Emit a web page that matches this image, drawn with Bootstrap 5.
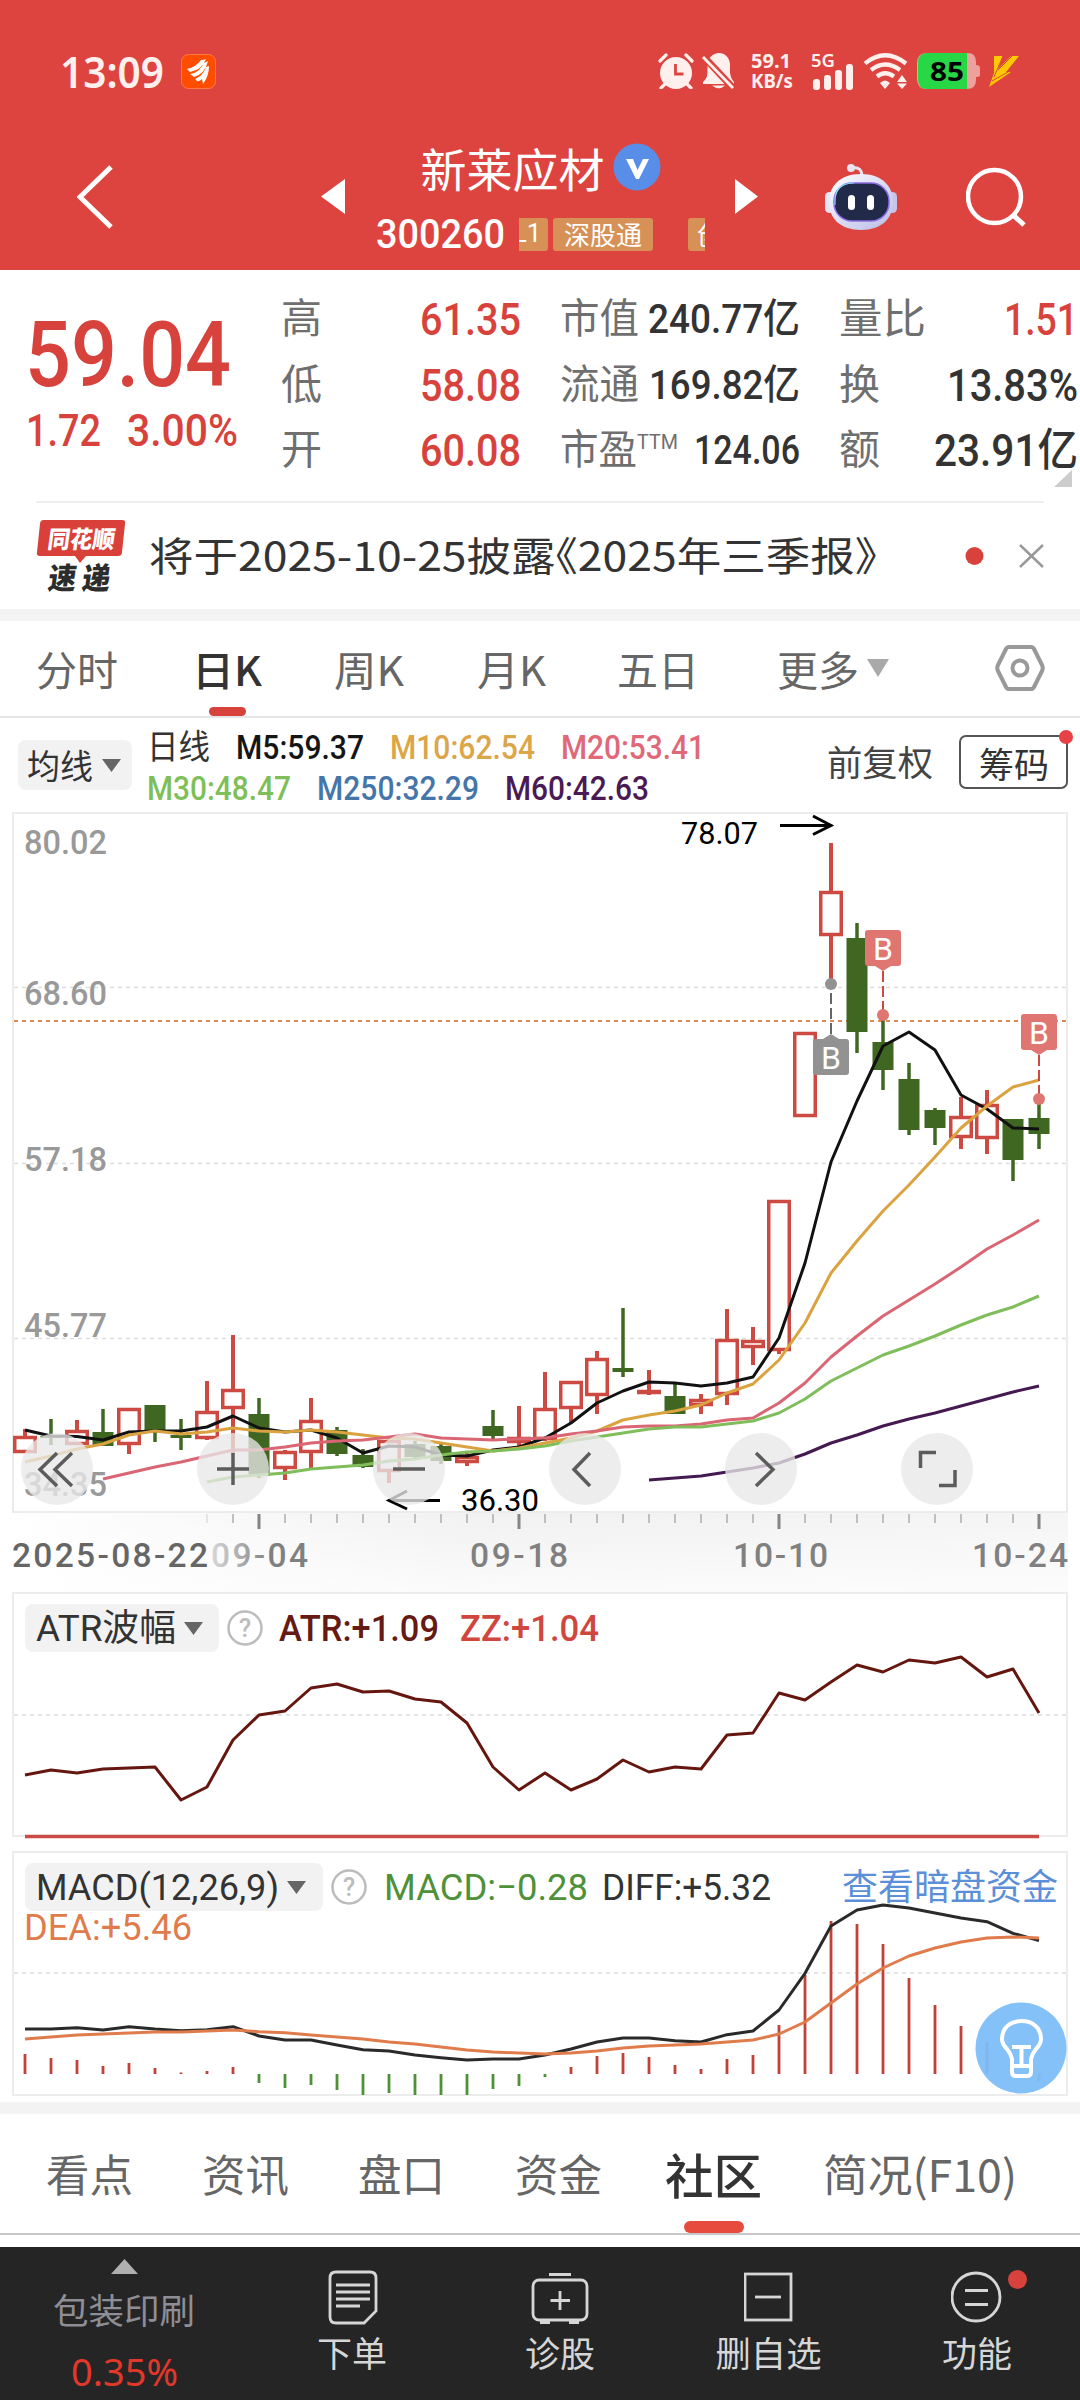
<!DOCTYPE html>
<html lang="zh-CN">
<head>
<meta charset="utf-8">
<meta name="viewport" content="width=device-width, initial-scale=1">
<title>新莱应材 300260</title>
<link href="https://cdn.jsdelivr.net/npm/bootstrap@5.3.0/dist/css/bootstrap.min.css" rel="stylesheet">
<style>
body{width:1080px;height:2400px;overflow:hidden;margin:0;background:#fff;font-family:Roboto,"Noto Sans CJK SC",sans-serif;font-weight:400;color:#333;line-height:1}
svg{display:block;flex:none}
[data-w]{display:inline-block;white-space:nowrap;transform-origin:0 50%;line-height:1}
.cjk{font-family:"Noto Sans CJK SC",sans-serif}
.up{color:#d7433c}
.status-bar{height:140px;padding:2px 61px 0 60px;color:#fff0ee;font-family:"Noto Sans",sans-serif}
.clock{font-size:43px;font-weight:600}
.app-ico{margin-left:17px}
.net-speed{font-size:20px;font-weight:700;width:44px;margin-left:15px}
.net-speed span{display:block}
.top{background:#dd443f;height:270px}
.top-nav{height:130px;padding-left:77px;padding-bottom:17px;color:#fff}
.top-title{width:329px;margin:0 30px 0 31px;height:106px}
.top-title .nm{font-size:46px;height:46px}
.top-title .code{font-size:40px;font-weight:500}
.code-row{margin-top:25px}
.prev{margin-left:206px}.robot{margin-left:67px}.finder{margin-left:69px}
.tags{width:186px;height:33px;overflow:hidden;margin-left:14px}
.tags span{background:#d79055;border-radius:3px;height:33px;line-height:31px;font-size:26px;flex:none;text-align:center}
.tag-a{width:60px;margin-left:-31px;padding-left:18px}.tag-b{width:100px;margin:0 35px 0 5px}.tag-c{width:60px;text-align:left!important;padding-left:9px}
.quote{height:231px;padding:17px 0 0 28px}
.quote>div{flex:none}
.q-main{width:253px;padding-top:23px}
.q-price{font-size:91px;font-weight:500;height:99px;margin-left:-3px}
.q-chg{font-size:44px;font-weight:500;gap:26px;margin-left:-2px}
.q-col{margin-right:39px;width:240px}
.q-col:last-of-type{width:239px;margin-right:0}
.q-col>div{height:65.5px}
.q-col b{font-weight:500;font-size:45px;color:#333}
.q-col b.sm{font-size:41px}
.q-col b.up{color:#d7433c}
.q-lab{color:#6f6f6f;font-size:41px}
.q-lab sup{font-size:21px;top:-.75em}
.q-more{right:8px;bottom:14px}
.notice{height:108px;margin:0 36px;border-top:2px solid #eee}
.notice-txt{margin-left:21px;font-size:40px;font-feature-settings:"halt";margin-bottom:4px}
.strip{height:12px;background:#f3f3f3}
.k-tabs{height:97px;border-bottom:2px solid #e6e6e6;padding-left:36px;display:grid;grid-template-columns:156px 142px 143px 140px 160px 218px 50px;font-size:41px;color:#666}
.k-tabs>div{display:flex;align-items:center;height:95px;position:relative;padding-bottom:1px}
.k-tabs .on{color:#333;font-weight:500}
.bar-on{position:absolute;background:#d7433c;border-radius:5px;bottom:0;height:9px;left:17px;width:37px}
.ma{height:94px;padding:0 12px 0 18px}
.ma-btn,.ind-btn{background:#f2f2f2;border-radius:8px}
.ma-btn{width:114px;height:50px;font-size:34px;padding-left:9px;gap:9px}
.ma-legend{margin-left:15px;font-size:34px;font-weight:500;padding-top:9px}
.ma-legend>div{gap:26px;height:40.5px}
.c5{color:#151515}.c10{color:#dca548}.c20{color:#e06878}.c30{color:#7fbf5a}.c250{color:#4576aa}.c60{color:#4a1a55}
.adj{font-size:35px;color:#444;padding-bottom:10px}
.chips{width:109px;height:54px;border:2px solid #555;border-radius:7px;font-size:35px;margin-left:26px;padding-left:18px;position:relative;margin-bottom:6px}
.red-dot{position:absolute;background:#e84045;border-radius:50%;width:14px;height:14px;right:-7px;top:-7px}
.panel{margin:0 12px;border:2px solid #ececec;position:relative;height:245px}
.panel>.plot{position:absolute;left:-14px;top:-2px}
.panel-macd{margin-top:14px}
.panel-head{position:relative;padding:10px 0 0 11px;font-size:37px;font-weight:500}
.ind-btn{height:48px;font-weight:400;font-size:37px;padding-left:11px}
.w-atr{width:194px}.w-macd{width:298px}
.v-atr{color:#651a14;margin-left:16px}.v-zz{color:#d0463f;margin-left:21px}
.v-macd{color:#4f9138;margin-left:17px;font-weight:400}.v-diff{color:#333;margin-left:14px;font-weight:400}
.bulb{position:absolute;right:-1px;bottom:0}
.link-blue{color:#5b8fd8;font-weight:400;font-size:36px;padding-bottom:6px}
.dea{position:relative;font-size:37px;font-weight:400;color:#e07c4c;padding-left:10px;height:34px;margin-top:-2px}
.strip-2{margin-top:6px}
.b-tabs{height:121px;border-bottom:2px solid #c8c8c8;padding-left:46px;display:grid;grid-template-columns:156px 156px 157px 150px 158px 1fr;font-size:44px;color:#666}
.b-tabs>div{display:flex;align-items:center;position:relative;height:119px;padding-bottom:1px}
.b-tabs .on{font-size:48px;font-weight:500;color:#333}
.b-tabs .bar-on{height:12px;width:60px;left:19px;background:#e64b3d;border-radius:6px}
.dock{margin-top:12px;height:153px;background:#252525;color:#d6d6d6;display:grid;grid-template-columns:248px 209px 206px 211px 206px;font-size:35px}
.dock>div{display:flex;flex-direction:column;align-items:center;position:relative}
.dock svg{margin-top:20px;height:62px}
.dock .d1 svg{margin-top:12px;height:15px}
.dock .lab{height:40px;margin-top:5px}
.d1 .sec{color:#8e8e96;margin-top:17px;height:36px}
.d1 .pct{color:#e2382b;font-size:38px;margin-top:25px;font-family:"Noto Sans",sans-serif}
.dock .red-dot{width:19px;height:19px;right:53px;top:23px;background:#d7433c}
</style>
<script src="https://cdn.jsdelivr.net/npm/bootstrap@5.3.0/dist/js/bootstrap.bundle.min.js"></script>
</head>
<body>
<header class="top">
  <div class="status-bar d-flex align-items-center">
    <span class="clock" data-w="104">13:09</span>
    <svg class="app-ico" width="35" height="35" viewBox="0 0 35 35"><rect x=".5" y=".5" width="34" height="34" rx="7" fill="#ff4d00" stroke="#ff7a45"/><path d="M6 15Q15 13 20 6 23 6 25 5 21 16 9 18ZM9 20Q18 19 23 9L27 7Q24 20 13 23ZM14 25Q22 22 25 13L28 12Q28 22 22 30L21 25Q18 28 16 27Z" fill="#fff"/></svg>
    <svg class="ms-auto" width="36" height="36" viewBox="0 0 36 36" fill="#fff0ee"><circle cx="18" cy="20" r="16"/><path d="M2 8 8 2M34 8 28 2M7 31 3 35M29 31 33 35" stroke="#fff0ee" stroke-width="3.2" stroke-linecap="round"/><path d="M17.500 11v10h8" fill="none" stroke="#dd443f" stroke-width="2.8"/></svg>
    <svg class="ms-2" width="34" height="36" viewBox="0 0 34 36" fill="#fff0ee"><path d="M17 0C24 0 28 6 28 12V20Q29 26 32 29V31H1V29Q5 26 5.500 20V12C5.500 5 11 0 17 0ZM10 32.500H23Q17 38 10 32.500Z"/><path d="M1 3 31 35" stroke="#dd443f" stroke-width="7"/><path d="M1 4 31 35" stroke="#fff0ee" stroke-width="2.800"/></svg>
    <div class="net-speed"><span data-w="40">59.1</span><span data-w="42">KB/s</span></div>
    <svg class="ms-3" width="44" height="37" viewBox="0 0 44 37" fill="#fff0ee"><text x="0" y="14" font-size="18" font-weight="600" textLength="24" lengthAdjust="spacingAndGlyphs">5G</text><rect x="2" y="26" width="7" height="11" rx="3"/><rect x="13" y="22" width="7" height="15" rx="3"/><rect x="24" y="17" width="7" height="20" rx="3"/><rect x="35" y="11" width="7" height="26" rx="3"/></svg>
    <svg class="ms-2" width="46" height="36" viewBox="0 0 46 36" fill="none" stroke="#fff0ee" stroke-width="4.200"><path d="M2 10.500Q22-6 43 10.500M8 17Q22 6 37 17M14 23.500Q22 17 31 23.500"/><path d="M17 30Q22 25 27 30L22 36ZM39 22 44 29H34ZM39 36 44 30.500H34Z" fill="#fff0ee" stroke="none"/></svg>
    <svg class="ms-2" width="64" height="36" viewBox="0 0 64 36"><path d="M10 0H51Q59 0 59 9V12Q63 12 63 15V22Q63 24 59 24V27Q59 36 50 36H10Q0 36 0 26V10Q0 0 10 0Z" fill="#eda09c"/><path d="M10 0H50V36H10Q1 36 1 26V10Q1 0 10 0Z" fill="#28d746"/><text x="13" y="28" font-size="27" font-weight="700" textLength="34" lengthAdjust="spacingAndGlyphs">85</text></svg>
    <svg class="ms-2" width="30" height="31" viewBox="0 0 30 31"><path d="M5 0H14L9 13 22 0H30L17 16H22L0 31 5 17Z" fill="#ffc800"/><path d="M14 0 5 21M23 0 9 14M3 25 19 16" stroke="#dd443f" stroke-width="1" fill="none"/></svg>
  </div>
  <div class="top-nav d-flex align-items-center">
    <svg width="38" height="64" viewBox="0 0 38 64"><path d="M34 2 3 32 34 62" fill="none" stroke="#fff" stroke-width="5"/></svg>
    <svg class="prev" width="24" height="35" viewBox="0 0 24 35"><path d="M24 0V35L0 17.500Z" fill="#fff"/></svg>
    <div class="top-title">
      <div class="nm d-flex align-items-center justify-content-center"><span class="cjk" data-w="184">新莱应材</span><svg class="ms-2" width="48" height="48" viewBox="0 0 48 48"><circle cx="24" cy="24" r="23.500" fill="#588ee8"/><path d="M13 16H20L24.500 27 30 16H36L26 36H23Z" fill="#fff"/></svg></div>
      <div class="code-row d-flex align-items-center"><span class="code" data-w="129">300260</span><div class="tags d-flex"><span class="tag-a">L1</span><span class="tag-b cjk">深股通</span><span class="tag-c cjk">创</span></div></div>
    </div>
    <svg width="23" height="35" viewBox="0 0 23 35"><path d="M0 0V35L23 17.500Z" fill="#fff"/></svg>
    <svg class="robot" width="72" height="68" viewBox="0 0 72 68"><defs><linearGradient id="hd" x2="1" y2="1"><stop stop-color="#fff"/><stop offset="1" stop-color="#b9bce8"/></linearGradient></defs><path d="M27 5Q37 3 37 14" fill="none" stroke="#e8e4f2" stroke-width="3"/><circle cx="26" cy="5" r="4" fill="#e8e4f2"/><rect y="29" width="9" height="21" rx="4.500" fill="#e4e4f4"/><rect x="63" y="29" width="9" height="21" rx="4.500" fill="#c8c4e6"/><path d="M36 11C58 11 68 24 68 39 68 56 56 67 36 67 16 67 4 56 4 39 4 24 14 11 36 11Z" fill="url(#hd)"/><rect x="9" y="20" width="55" height="38" rx="18" fill="#222a4a" stroke="#8a6be0" stroke-width="1.500"/><path d="M10 42V38Q10 20 29 20" fill="none" stroke="#82dff2" stroke-width="1.200"/><rect x="23" y="32" width="7" height="15" rx="3.500" fill="#fff"/><rect x="42" y="32" width="7" height="15" rx="3.500" fill="#fff"/></svg>
    <svg class="finder" width="60" height="60" viewBox="0 0 60 60" fill="none" stroke="#fff"><circle cx="28.500" cy="29.500" r="26.500" stroke-width="4.500"/><path d="M47 48 58 58" stroke-width="5"/></svg>
  </div>
</header>

<section class="quote d-flex position-relative">
  <div class="q-main up"><div class="q-price"><span data-w="206">59.04</span></div><div class="q-chg d-flex"><span data-w="75">1.72</span><span data-w="111">3.00%</span></div></div>
  <div class="q-col">
    <div class="d-flex justify-content-between align-items-center"><span class="q-lab">高</span><b class="up" data-w="101">61.35</b></div>
    <div class="d-flex justify-content-between align-items-center"><span class="q-lab">低</span><b class="up" data-w="101">58.08</b></div>
    <div class="d-flex justify-content-between align-items-center"><span class="q-lab">开</span><b class="up" data-w="101">60.08</b></div>
  </div>
  <div class="q-col">
    <div class="d-flex justify-content-between align-items-center"><span class="q-lab" data-w="79">市值</span><b class="sm" data-w="152">240.77亿</b></div>
    <div class="d-flex justify-content-between align-items-center"><span class="q-lab" data-w="79">流通</span><b class="sm" data-w="151">169.82亿</b></div>
    <div class="d-flex justify-content-between align-items-center"><span class="q-lab" data-w="118">市盈<sup>TTM</sup></span><b class="sm" data-w="106">124.06</b></div>
  </div>
  <div class="q-col">
    <div class="d-flex justify-content-between align-items-center"><span class="q-lab" data-w="87">量比</span><b class="up" data-w="74">1.51</b></div>
    <div class="d-flex justify-content-between align-items-center"><span class="q-lab">换</span><b data-w="131">13.83%</b></div>
    <div class="d-flex justify-content-between align-items-center"><span class="q-lab">额</span><b data-w="144">23.91亿</b></div>
  </div>
  <svg class="q-more position-absolute" width="18" height="17" viewBox="0 0 18 17"><path d="M18 0V17H0Z" fill="#ccc"/></svg>
</section>

<section class="notice d-flex align-items-center">
  <svg width="92" height="76" viewBox="0 0 92 76" font-family="Noto Sans CJK SC" font-weight="900"><path d="M8 2H86Q90 2 89 6L86 34Q86 38 82 38H50L44 45 39 38H4Q0 38 1 34L4 6Q4 2 8 2Z" fill="#d94039"/><g transform="skewX(-8)"><text x="15" y="30" font-size="24" fill="#fff" textLength="67" lengthAdjust="spacingAndGlyphs">同花顺</text><text x="21" y="71" font-size="30" fill="#2c2c2c" textLength="28" lengthAdjust="spacingAndGlyphs">速</text><text x="55" y="71" font-size="30" fill="#2c2c2c" textLength="28" lengthAdjust="spacingAndGlyphs">递</text></g></svg>
  <span class="notice-txt cjk" data-w="728">将于2025-10-25披露《2025年三季报》</span>
  <svg class="ms-auto" width="79" height="24" viewBox="0 0 79 24"><circle cx="9.500" cy="12" r="9" fill="#d7433c"/><path d="M55 1 78 23M78 1 55 23" stroke="#999" stroke-width="2.500"/></svg>
</section>
<div class="strip"></div>

<nav class="k-tabs cjk">
  <div><span data-w="82">分时</span></div><div class="on"><span data-w="70">日K</span><i class="bar-on"></i></div><div><span data-w="70">周K</span></div><div><span data-w="69">月K</span></div><div><span data-w="82">五日</span></div>
  <div><span data-w="82">更多</span><svg class="ms-2" width="22" height="18" viewBox="0 0 22 18"><path d="M0 0H22L11 18Z" fill="#a9a9a9"/></svg></div>
  <div><svg width="50" height="46" viewBox="0 0 50 46" fill="none" stroke="#999" stroke-width="4"><path d="M14 2H36Q38 2 39 4L47 20Q48.500 23 47 26L39 42Q38 44 36 44H14Q12 44 11 42L3 26Q1.500 23 3 20L11 4Q12 2 14 2Z"/><circle cx="25" cy="23" r="7.500"/></svg></div>
</nav>

<section class="ma d-flex align-items-center">
  <div class="ma-btn d-flex align-items-center"><span class="cjk" data-w="66">均线</span><svg width="19" height="13" viewBox="0 0 19 13"><path d="M0 0H19L9.500 13Z" fill="#666"/></svg></div>
  <div class="ma-legend align-self-start">
    <div class="d-flex align-items-center"><span class="fw-normal" data-w="63">日线</span><span class="c5" data-w="128">M5:59.37</span><span class="c10" data-w="145">M10:62.54</span><span class="c20" data-w="144">M20:53.41</span></div>
    <div class="d-flex align-items-center"><span class="c30" data-w="144">M30:48.47</span><span class="c250" data-w="162">M250:32.29</span><span class="c60" data-w="144">M60:42.63</span></div>
  </div>
  <span class="adj cjk ms-auto" data-w="106">前复权</span>
  <div class="chips d-flex align-items-center"><span class="cjk" data-w="70">筹码</span><i class="red-dot"></i></div>
</section>

<svg id="kline" width="1080" height="780" viewBox="0 812 1080 780"></svg>

<section class="panel">
  <svg id="atr" class="plot" width="1080" height="250" viewBox="0 1592 1080 250"></svg>
  <div class="panel-head d-flex align-items-center">
    <div class="ind-btn w-atr d-flex align-items-center"><span data-w="140">ATR波幅</span><svg class="ms-2" width="19" height="13" viewBox="0 0 19 13"><path d="M0 0H19L9.500 13Z" fill="#666"/></svg></div>
    <svg class="ms-2" width="36" height="36" viewBox="0 0 36 36"><circle cx="18" cy="18" r="16.500" fill="none" stroke="#bcbcbc" stroke-width="2.500"/><text x="18" y="27" text-anchor="middle" font-size="25" fill="#bcbcbc">?</text></svg>
    <span class="v-atr" data-w="160">ATR:+1.09</span><span class="v-zz" data-w="139">ZZ:+1.04</span>
  </div>
</section>
<section class="panel panel-macd">
  <svg id="macd" class="plot" width="1080" height="250" viewBox="0 1851 1080 250"></svg>
  <div class="panel-head d-flex align-items-center">
    <div class="ind-btn w-macd d-flex align-items-center"><span data-w="243">MACD(12,26,9)</span><svg class="ms-2" width="19" height="13" viewBox="0 0 19 13"><path d="M0 0H19L9.500 13Z" fill="#666"/></svg></div>
    <svg class="ms-2" width="36" height="36" viewBox="0 0 36 36"><circle cx="18" cy="18" r="16.500" fill="none" stroke="#bcbcbc" stroke-width="2.500"/><text x="18" y="27" text-anchor="middle" font-size="25" fill="#bcbcbc">?</text></svg>
    <span class="v-macd" data-w="204">MACD:−0.28</span><span class="v-diff" data-w="169">DIFF:+5.32</span>
    <span class="link-blue cjk ms-auto me-2" data-w="216">查看暗盘资金</span>
  </div>
  <div class="dea"><span data-w="168">DEA:+5.46</span></div>
  <svg class="bulb" width="92" height="92" viewBox="0 0 92 92"><circle cx="46" cy="46" r="45.500" fill="#7cbdf8" fill-opacity=".94"/><g fill="none" stroke="#fff" stroke-width="4"><path d="M37 64V57Q36 52 32 47 27 42 27 37C27 26 35 19 46.500 19 58 19 66 26 66 37Q66 42 61 47 57 52 56 57V64M37 45H56M46.500 45V64"/><path d="M37 64H56V70Q56 74 52 74H41Q37 74 37 70Z"/></g></svg>
</section>
<div class="strip strip-2"></div>

<nav class="b-tabs cjk">
  <div><span data-w="87">看点</span></div><div><span data-w="87">资讯</span></div><div><span data-w="87">盘口</span></div><div><span data-w="87">资金</span></div><div class="on"><span data-w="97">社区</span><i class="bar-on"></i></div><div><span data-w="194">简况(F10)</span></div>
</nav>
<footer class="dock cjk">
  <div class="d1"><svg width="27" height="15" viewBox="0 0 27 15"><path d="M13.500 0 27 15H0Z" fill="#b0b0b0"/></svg><span class="sec" data-w="142">包装印刷</span><span class="pct" data-w="107">0.35%</span></div>
  <div><svg width="50" height="62" viewBox="0 0 50 62" fill="none" stroke="#d6d6d6" stroke-width="2.800"><path d="M8 5H42Q48 5 48 11V44L36 56H8Q2 56 2 50V11Q2 5 8 5ZM8 18H42M8 25H42M8 32H42M8 39H32"/></svg><span class="lab" data-w="70">下单</span></div>
  <div><svg width="58" height="62" viewBox="0 0 58 62" fill="none" stroke="#d6d6d6" stroke-width="2.800"><rect x="2" y="13" width="54" height="40" rx="6"/><path d="M18 7.500H40M29 24V43M19.500 33.500H39M9 55.500H19M38 55.500H48"/></svg><span class="lab" data-w="70">诊股</span></div>
  <div><svg width="50" height="62" viewBox="0 0 50 62" fill="none" stroke="#d6d6d6" stroke-width="2.800"><rect x="1" y="7" width="46" height="46"/><path d="M11 30H37"/></svg><span class="lab" data-w="106">删自选</span></div>
  <div><svg width="52" height="62" viewBox="0 0 52 62" fill="none" stroke="#d6d6d6" stroke-width="2.800"><circle cx="25" cy="30" r="24"/><path d="M14 23.500H37M14 37.500H37"/></svg><span class="lab" data-w="70">功能</span><i class="red-dot"></i></div>
</footer>

<script>
// Condense each marked label to its set width
document.querySelectorAll('[data-w]').forEach(e=>{
  const r=document.createRange();r.selectNodeContents(e);
  const n=r.getBoundingClientRect().width,w=+e.dataset.w;
  e.style.width=n+'px';
  e.style.transform='scaleX('+(w/n).toFixed(4)+')';
  e.style.marginRight=(w-n+(e.classList.contains('ms-auto')&&e.classList.contains('me-2')?8:0)).toFixed(2)+'px';
  if(e.parentElement.matches('.dock>div')){e.style.marginRight='0';e.style.transformOrigin='50% 50%'}
});
const X=i=>25+26*i;
const line=(a,c,s=0,w=3)=>`<polyline fill="none" stroke="${c}" stroke-width="${w}" stroke-linejoin="round" points="${a.map((y,i)=>X(i+s)+','+y).join(' ')}"/>`;
const txt=(x,y,w,f,c,t,k=500,m='spacingAndGlyphs')=>`<text x="${x}" y="${y}" font-size="${f}" font-weight="${k}" fill="${c}" textLength="${w}" lengthAdjust="${m}">${t}</text>`;
// Candles: colour, body top, body bottom, high, low
const K=[['r',1436,1453,1429,1453],['g',1436,1438,1419,1445],['r',1430,1445,1420,1445],['g',1432,1446,1409,1446],['r',1408,1445,1408,1454],['g',1405,1431,1405,1442],['g',1435,1438,1419,1450],['r',1411,1439,1381,1440],['r',1389,1409,1335,1455],['g',1414,1476,1398,1478],['r',1451,1469,1450,1480],['r',1420,1453,1398,1470],['g',1430,1454,1427,1456],['g',1455,1467,1449,1468],['r',1440,1472,1440,1483],['g',1444,1457,1441,1458],['g',1446,1461,1443,1464],['r',1456,1463,1453,1466],['g',1426,1436,1410,1439],['r',1437,1443,1406,1446],['r',1408,1440,1372,1441],['r',1381,1409,1381,1423],['r',1358,1396,1351,1414],['g',1368,1372,1308,1377],['r',1390,1394,1370,1395],['g',1396,1414,1383,1414],['r',1399,1406,1394,1414],['r',1339,1395,1309,1405],['r',1340,1348,1327,1365],['r',1200,1351,1200,1354],['r',1032,1117,1032,1117],['r',891,936,843,984],['g',938,1032,923,1053],['g',1042,1070,1015,1090],['g',1079,1130,1063,1135],['g',1110,1128,1108,1145],['r',1116,1138,1097,1149],['r',1104,1139,1090,1154],['g',1119,1160,1119,1181],['g',1118,1134,1098,1149]];
const M5=[1430,1436,1436.5,1440,1432,1431,1431,1427,1416,1428,1432,1430,1438,1453,1446,1447,1455,1456,1450,1447,1438,1423,1403,1391,1382,1383,1386,1383,1377,1338,1263,1162,1101,1046,1032,1050,1095,1109,1128,1129];
const M10=[1462,1456,1449,1444,1435,1431,1434,1432,1428,1431,1432,1430,1432,1435,1438,1439,1443,1447,1451,1448,1443,1438,1431,1420,1415,1411,1405,1393,1384,1360,1323,1273,1241,1211,1185,1157,1128,1106,1087,1080];
const M20=[1479,1473,1467,1462,1456,1450,1450,1447,1443,1441,1440,1437,1434,1438,1439,1440,1439,1438,1434,1431,1427,1426,1426,1424,1420,1418,1403,1383,1357,1336,1316,1300,1284,1267,1249,1235,1220];
const M30=[1482,1477,1475,1473,1469,1467,1465,1461,1459,1455,1452,1451,1449,1446,1441,1437,1433,1429,1427,1427,1424,1421,1413,1399,1381,1368,1355,1346,1336,1325,1315,1307,1296];
const M60=[1480,1478,1476,1472,1468,1463,1454,1443,1435,1426,1419,1413,1406,1399,1392,1386];
let s='<defs><linearGradient id="ax" x2="1"><stop offset="0" stop-color="#fff"/><stop offset=".45" stop-color="#f1f1f1"/><stop offset="1" stop-color="#f5f5f5"/></linearGradient><linearGradient id="ay" x2="0" y2="1"><stop offset="0" stop-color="#fff" stop-opacity="0"/><stop offset="1" stop-color="#fff" stop-opacity=".7"/></linearGradient><linearGradient id="fd" gradientUnits="userSpaceOnUse" x1="200" x2="270" y1="0" y2="0"><stop stop-color="#e8e8e8"/><stop offset="1" stop-color="#808080"/></linearGradient></defs>';
s+='<rect x="12" y="1513" width="1056" height="79" fill="url(#ax)"/><rect x="12" y="1513" width="1056" height="79" fill="url(#ay)"/><rect x="13" y="813" width="1054" height="699" fill="#fff" stroke="#ececec" stroke-width="2"/>';
[987,1163,1338].forEach(y=>s+=`<path d="M14 ${y}.500H1066" stroke="#dedede" stroke-width="1.300" stroke-dasharray="4 4"/>`);
[[854,'80.02'],[1005,'68.60'],[1171,'57.18'],[1337,'45.77'],[1496,'34.35']].forEach(a=>s+=txt(24,a[0],83,33,'#999',a[1]));
s+='<path d="M14 1021H1066" stroke="#dd8a52" stroke-width="2" stroke-dasharray="4 4"/>';
K.forEach(([c,t,b,h,l],i)=>{const x=X(i);
  if(c=='g')s+=`<path d="M${x} ${h}V${l}" stroke="#3f6722" stroke-width="3.500"/><rect x="${x-10.5}" y="${t}" width="21" height="${b-t}" fill="#3f6722"/>`;
  else s+=`<path d="M${x} ${h}V${t}M${x} ${b}V${l}" stroke="#cc4a42" stroke-width="4"/><rect x="${x-10.25}" y="${t+1.5}" width="20.500" height="${Math.max(b-t-3,1)}" fill="#fff" stroke="#cc4a42" stroke-width="3.500"/>`});
s+=line(M5,'#111')+line(M10,'#dba340')+line(M20,'#da6673',3)+line(M30,'#80bd5b',7)+line(M60,'#441a50',24);
const mark=(x,y,c,d,up)=>`<rect x="${x-18}" y="${y}" width="36" height="36" rx="3" fill="${c}"/><path d="${up?`M${x-8} ${y}L${x} ${y-5}L${x+8} ${y}Z`:`M${x-8} ${y+36}L${x} ${y+41}L${x+8} ${y+36}Z`}" fill="${c}"/><path d="M${x} ${up?y-5:y+41}V${d}" stroke="${up?'#666':'#cc4a42'}" stroke-width="2" stroke-dasharray="11 4"/><circle cx="${x}" cy="${d}" r="6" fill="${c}"/><text x="${x}" y="${y+29.500}" text-anchor="middle" font-size="32" fill="#fff">B</text>`;
s+=mark(831,1039,'#929292',984,1)+mark(883,930,'#df7672',1015)+mark(1039,1014,'#df7672',1099);
s+='<g fill="none" stroke="#000" stroke-width="3"><path d="M780 825.500H831M813 816 831 825.500 813 834.500M440 1500.500H389M407 1491 389 1500.500 407 1509"/></g>'+txt(681,844,77,31,'#000','78.07',400)+txt(461,1511,78,31,'#000','36.30',400);
[57,233,409,585,761,937].forEach(x=>s+=`<circle cx="${x}" cy="1469" r="36" fill="#e8e8e8" fill-opacity=".78"/>`);
s+='<g fill="none" stroke="#5c5c5c" stroke-width="3.500"><path d="M57 1453 40 1469.500 57 1486M72 1453 55 1469.500 72 1486M217 1469H249M233 1453V1485M393 1469H425M590 1453 574 1469.500 590 1486M756 1453 773 1469.500 756 1486M920.500 1468V1452.500H936M955 1470V1485.500H939"/></g>';
for(let i=7;i<40;i++){const m=(i%10==9);s+=`<path d="M${X(i)} 1514V${m?1529:1523}" stroke="${m?'#858585':i<8?'#ddd':'#a8a8a8'}" stroke-width="${m?3:1.4}"/>`}
const S='spacing';
s+=txt(12,1567,196,33.5,'#666','2025-08-22',500,S)+txt(211,1567,97,33.5,'url(#fd)','09-04',500,S)+txt(470,1567,98,33.5,'#808080','09-18',500,S)+txt(733,1567,95,33.5,'#808080','10-10',500,S)+txt(972,1567,96,33.5,'#808080','10-24',500,S);
kline.innerHTML=s;
const A=[1775,1770,1773,1769,1768,1767,1800,1787,1740,1715,1711,1688,1684,1692,1691,1699,1702,1723,1767,1790,1773,1790,1779,1760,1772,1767,1769,1735,1733,1693,1700,1682,1665,1672,1660,1663,1657,1677,1669,1713];
atr.innerHTML='<path d="M14 1715H1066" stroke="#e4e4e4" stroke-width="2" stroke-dasharray="4 4"/><path d="M25 1836.500H1039" stroke="#c94b44" stroke-width="3.500"/>'+line(A,'#65160f');
const B=[2054,2058,2060,2066,2063,2068,2072.5,2071,2067,2083,2088,2085,2090,2095,2093,2095,2095,2095,2089,2086,2077,2067,2056,2053,2057,2065,2069,2059,2055,2025,1975,1921,1924,1944,1978,2005,2026,2042,2060,2081];
const D=[567,567,563,570,560,567,572,569,560,588,600,600,615,629,633,645,653,660,657,657,645,627,606,594,594,602,606,584,573,510,400,258,210,195,204,219,234,245,280,302].map(v=>1840+v/3);
const E=[597,591,585,582,579,576,576,573,570,575,578,585,591,597,606,612,621,630,636,639,642,639,633,624,618,615,612,606,600,582,546,489,432,384,348,324,306,294,291,294].map(v=>1840+v/3);
macd.innerHTML='<path d="M14 1973H1066" stroke="#e4e4e4" stroke-width="2" stroke-dasharray="4 4"/>'+B.map((y,i)=>`<path d="M${X(i)} 2074V${y}" stroke="${y>2074?'#4f9138':'#c0433a'}" stroke-width="2.800"/>`).join('')+line(D,'#2a2a2a')+line(E,'#e07c4c');
</script>
</body>
</html>
